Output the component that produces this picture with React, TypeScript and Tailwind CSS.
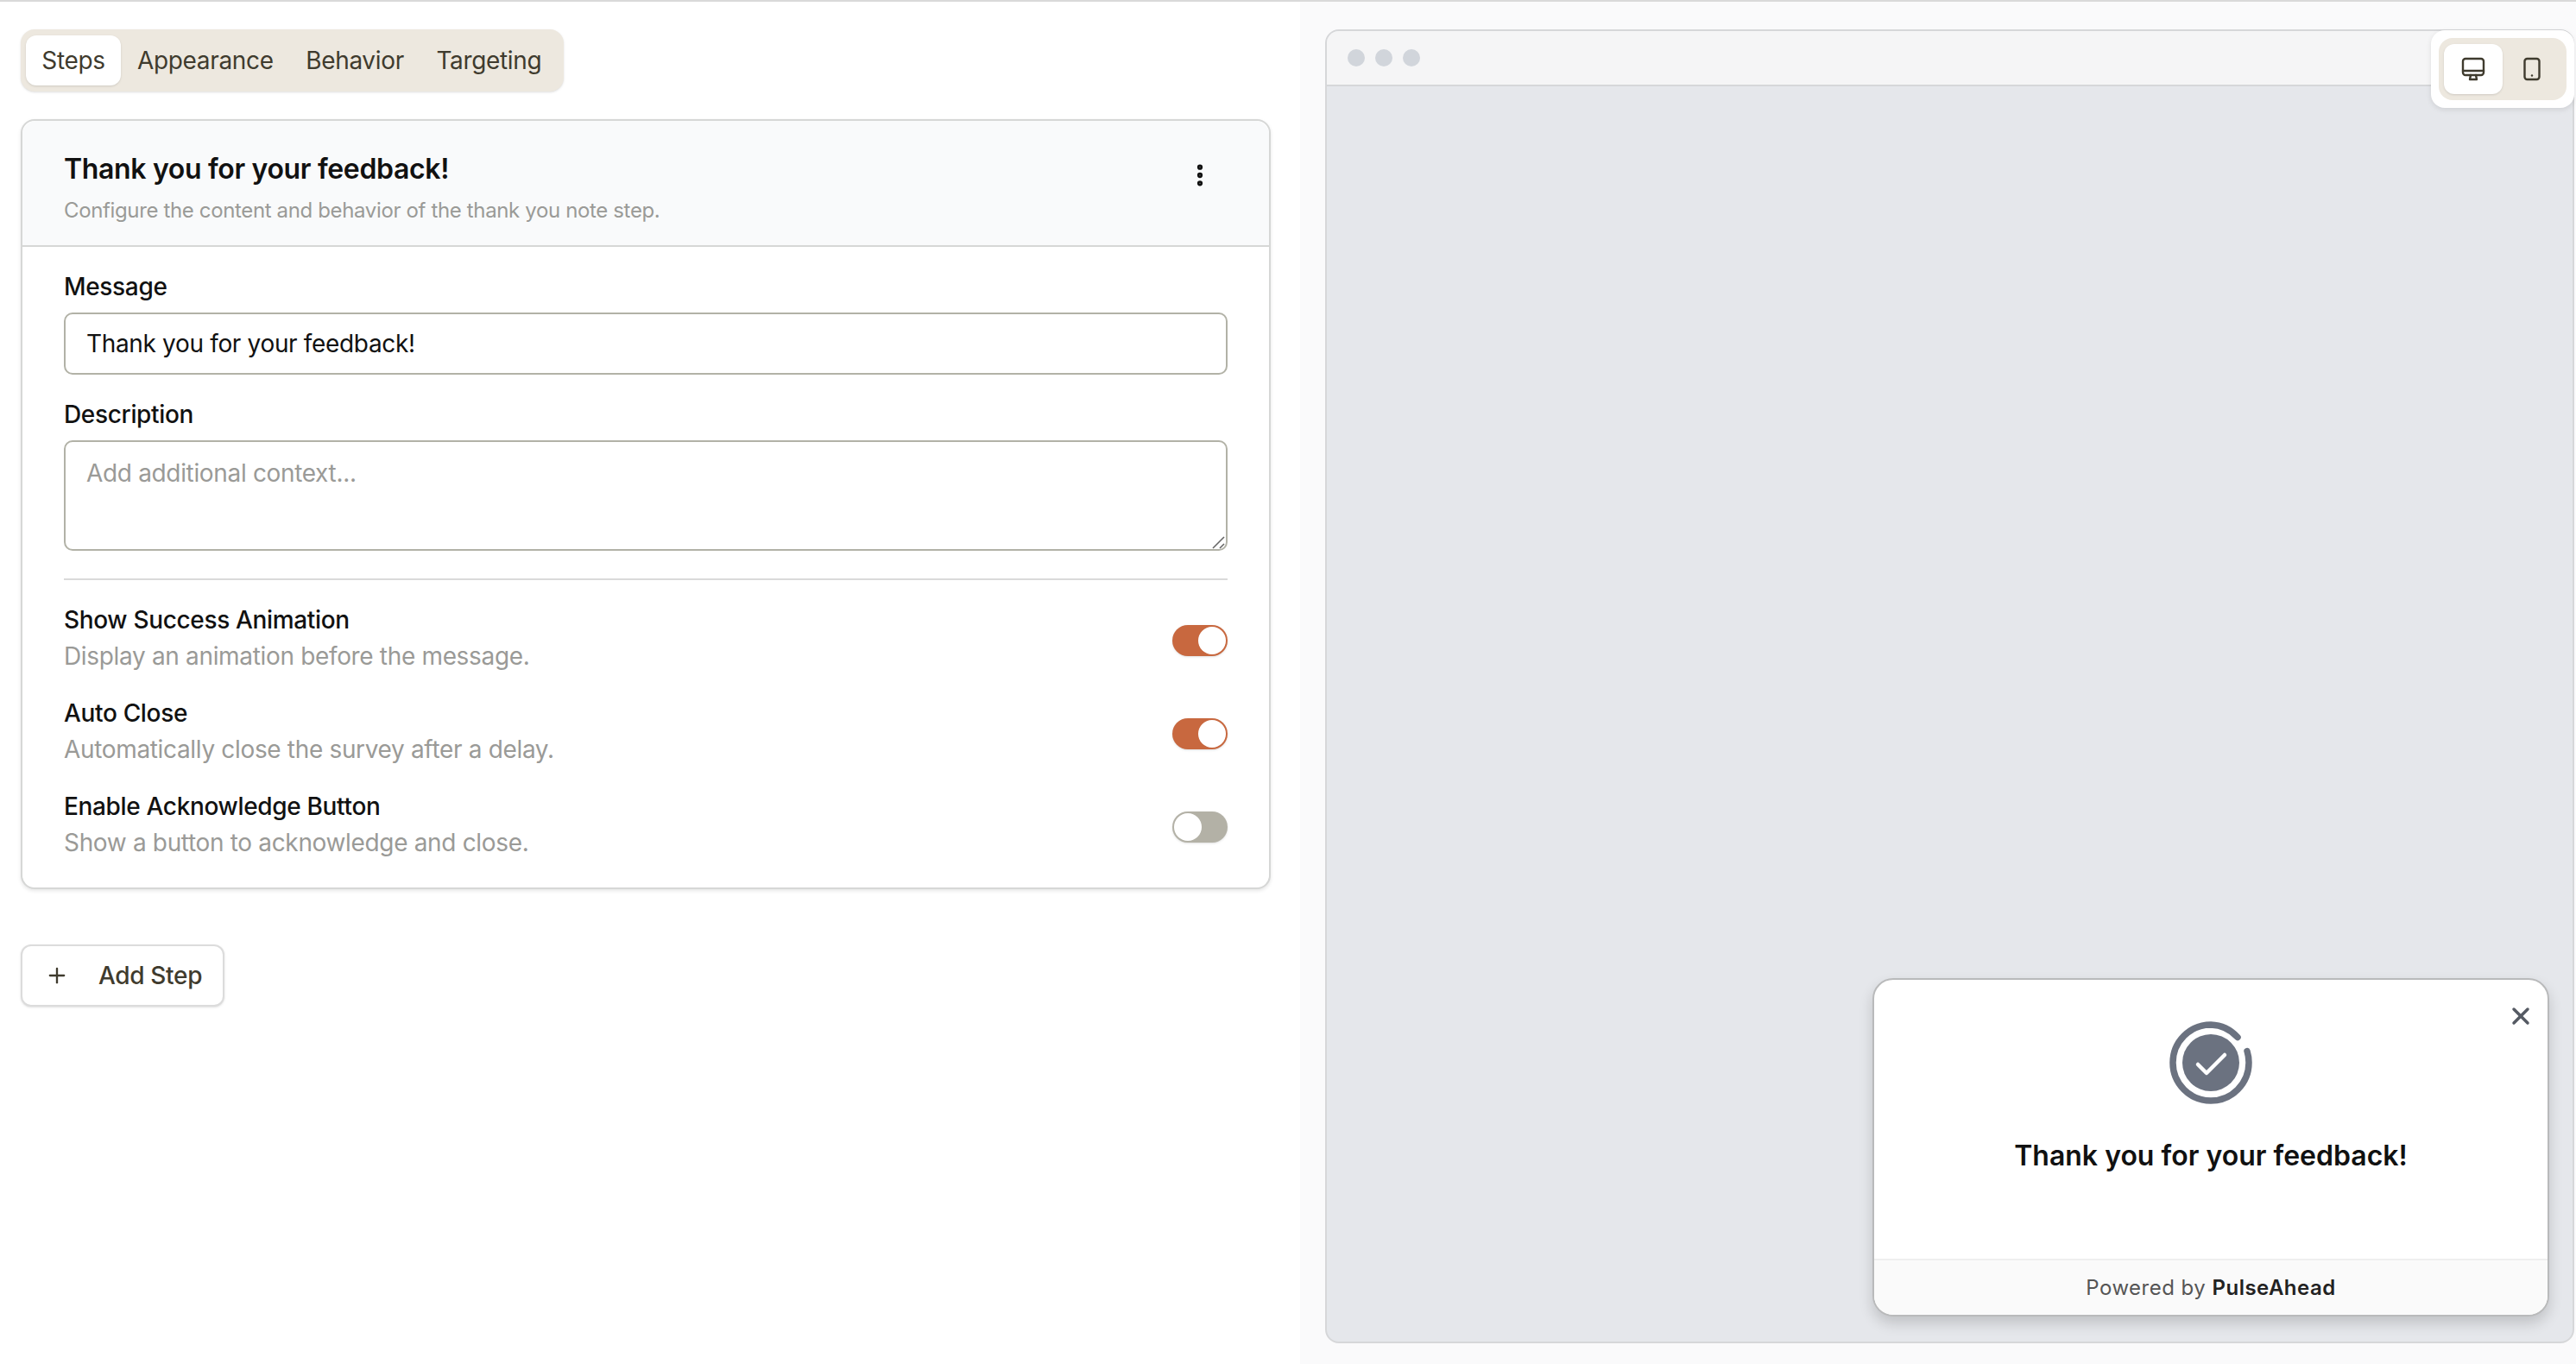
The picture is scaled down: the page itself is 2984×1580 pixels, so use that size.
import { EllipsisVertical, Plus, X } from "lucide-react";

const settings = [
  { title: "Show Success Animation", hint: "Display an animation before the message.", on: true },
  { title: "Auto Close", hint: "Automatically close the survey after a delay.", on: true },
  { title: "Enable Acknowledge Button", hint: "Show a button to acknowledge and close.", on: false },
];

function Toggle({ on }: { on: boolean }) {
  return (
    <div
      className={`mt-[26px] flex h-9 w-16 shrink-0 items-center rounded-full p-0.5 shadow-sm ${
        on ? "justify-end bg-[#c8683f]" : "justify-start bg-[#b3b1a6]"
      }`}
    >
      <div className="h-8 w-8 rounded-full bg-white" />
    </div>
  );
}

function DesktopIcon() {
  return (
    <svg width="28" height="28" viewBox="0 0 28 28" fill="none" stroke="#3f3b2e" strokeWidth="2.4" strokeLinejoin="round" strokeLinecap="round">
      <rect x="2" y="2" width="24" height="19" rx="3" />
      <path d="M2 16h24" />
      <path d="M11 21l-1 5h8l-1-5" />
    </svg>
  );
}

function PhoneIcon() {
  return (
    <svg width="20" height="28" viewBox="0 0 20 28" fill="none" stroke="#3f3b2e" strokeWidth="2.4" strokeLinecap="round">
      <rect x="1.5" y="2" width="17" height="24" rx="3" />
      <path d="M10 21.5h.01" />
    </svg>
  );
}

function SuccessIcon() {
  return (
    <svg width="96" height="96" viewBox="0 0 96 96" fill="none">
      <circle cx="48" cy="48" r="33" fill="#6b7280" />
      <path d="M79 18.5A44 44 0 0 0 48 4A44 44 0 1 0 92 48A44 44 0 0 0 90 34.5" stroke="#6b7280" strokeWidth="7.5" strokeLinecap="round" />
      <path d="M33 50l10 10 21-21" stroke="#fff" strokeWidth="4.5" strokeLinecap="round" strokeLinejoin="round" />
    </svg>
  );
}

export default function App() {
  return (
    <div className="flex h-[1580px] w-full overflow-hidden border-t-2 border-[#d9d9d9] bg-white font-['Inter',sans-serif] text-[28px] tracking-[-0.012em]">
      {/* Editor side */}
      <div className="w-[1506px] shrink-0 pl-6 pr-[34px] pt-8">
        <div className="flex h-[72px] w-[629px] items-center rounded-2xl bg-[#ede8df] pl-1.5 text-[#3f3b2e] shadow-sm">
          <div className="flex h-[58px] w-[110px] items-center justify-center rounded-xl bg-white shadow-sm">Steps</div>
          <div className="ml-[19px] flex gap-[37.5px]">
            <span>Appearance</span>
            <span>Behavior</span>
            <span>Targeting</span>
          </div>
        </div>

        <div className="mt-8 rounded-2xl border-2 border-[#d6d7d6] bg-white shadow-[0_2px_4px_rgba(0,0,0,0.1)]">
          <div className="flex h-[146px] items-start justify-between rounded-t-2xl border-b-2 border-[#d6d7d6] bg-[#f9fafb] px-12 pt-[36px]">
            <div>
              <h2 className="text-[32px] leading-[40px] font-semibold text-[#111]">Thank you for your feedback!</h2>
              <p className="mt-[12px] text-2xl leading-[32px] tracking-[-0.015em] text-[#9a9a97]">Configure the content and behavior of the thank you note step.</p>
            </div>
            <EllipsisVertical className="mt-[11px] mr-[16px] text-[#111]" size={32} strokeWidth={2.7} />
          </div>

          <div className="px-12 pt-[26px] pb-[30px]">
            <label className="block leading-[40px] font-medium text-[#111]">Message</label>
            <input
              readOnly
              value="Thank you for your feedback!"
              className="mt-[10px] block h-[72px] w-full rounded-[10px] border-2 border-[#b2b2a7] bg-white px-6 text-[#111] outline-none"
            />
            <label className="mt-[26px] block leading-[40px] font-medium text-[#111]">Description</label>
            <div className="relative mt-[10px]">
              <textarea
                placeholder="Add additional context..."
                className="block h-[128px] w-full resize-none rounded-[10px] border-2 border-[#b2b2a7] bg-white px-6 py-[16px] leading-[40px] outline-none placeholder:text-[#9a9a97]"
              />
              {/* resize grip */}
              <svg className="absolute right-[3px] bottom-[2px]" width="15" height="15" viewBox="0 0 15 15" fill="none" stroke="#666" strokeWidth="1.6">
                <path d="M1 14L14 1" />
                <path d="M9 14l5-5" />
              </svg>
            </div>
            <div className="mt-[32px] h-0.5 bg-[#dadada]" />
            <div className="mt-[26px] flex flex-col gap-[24px]">
              {settings.map((s) => (
                <div key={s.title} className="flex h-[84px] items-start justify-between">
                  <div>
                    <p className="leading-[40px] font-medium text-[#111]">{s.title}</p>
                    <p className="mt-[2px] leading-[40px] text-[#9a9a97]">{s.hint}</p>
                  </div>
                  <Toggle on={s.on} />
                </div>
              ))}
            </div>
          </div>
        </div>

        <button className="mt-[64px] flex h-[72px] w-[236px] items-center gap-[34px] rounded-xl border-2 border-[#dcdcdc] bg-white pl-[26px] font-medium text-[#3f3b2e] shadow-sm">
          <Plus size={28} strokeWidth={2} />
          Add Step
        </button>
      </div>

      {/* Preview side */}
      <div className="relative flex-1 bg-[#fafafb] pt-8 pl-[29px] pr-0.5 pb-[24px]">
        <div className="relative flex h-full flex-col overflow-hidden rounded-2xl border-2 border-[#d6d7d9] bg-[#e5e7eb]">
          <div className="flex h-[64px] shrink-0 items-center gap-3 border-b-2 border-[#d6d7d9] bg-[#f5f5f6] pl-6">
            <span className="h-5 w-5 rounded-full bg-[#d1d5db]" />
            <span className="h-5 w-5 rounded-full bg-[#d1d5db]" />
            <span className="h-5 w-5 rounded-full bg-[#d1d5db]" />
          </div>

          <div className="absolute right-[27px] bottom-[29px] flex h-[392px] w-[784px] flex-col overflow-hidden rounded-3xl border-2 border-[#b9babb] bg-white tracking-normal shadow-[0_8px_16px_rgba(0,0,0,0.16)]">
            <X className="absolute top-[26px] right-[15px] text-[#555a63]" size={32} strokeWidth={2.6} />
            <div className="flex flex-1 flex-col items-center pt-[48px]">
              <SuccessIcon />
              <p className="mt-[40px] text-[32px] leading-[40px] font-semibold text-[#111]">Thank you for your feedback!</p>
            </div>
            <div className="flex h-[65px] shrink-0 items-center justify-center border-t-2 border-[#efefef] bg-[#fafafa] text-2xl tracking-[0.02em] text-[#555]">
              Powered by&nbsp;<span className="font-semibold text-[#222]">PulseAhead</span>
            </div>
          </div>
        </div>

        <div className="absolute top-[33px] right-0.5 z-10 rounded-2xl bg-white p-[9px] shadow-[0_2px_6px_rgba(0,0,0,0.1)]">
          <div className="flex h-[72px] w-[148px] items-center rounded-2xl bg-[#ede8df] pl-1.5">
            <div className="flex h-[58px] w-[68px] items-center justify-center rounded-xl bg-white shadow-sm">
              <DesktopIcon />
            </div>
            <div className="flex flex-1 items-center justify-center pr-[6px]">
              <PhoneIcon />
            </div>
          </div>
        </div>
      </div>
    </div>
  );
}
